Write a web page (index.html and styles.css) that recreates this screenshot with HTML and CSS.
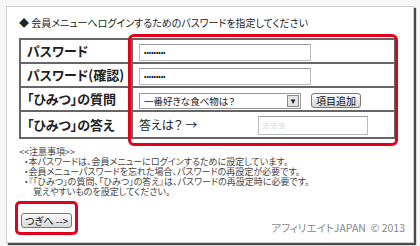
FILE: index.html
```html
<!DOCTYPE html>
<html lang="ja">
<head>
    <meta charset="UTF-8">
    <title>パスワード指定</title>
    <link rel="stylesheet" href="styles.css">
</head>
<body>
    <!-- 外枠 -->
    <div class="panel">
        <p class="ttl">◆ 会員メニューへログインするためのパスワードを指定してください</p>

        <!-- 入力テーブル -->
        <div class="tblwrap">
            <table class="frm">
                <tr>
                    <th>パスワード</th>
                    <td><span class="inp pw">•••••••••</span></td>
                </tr>
                <tr>
                    <th>パスワード(確認)</th>
                    <td><span class="inp pw">•••••••••</span></td>
                </tr>
                <tr>
                    <th>「ひみつ」の質問</th>
                    <td>
                        <span class="sel">一番好きな食べ物は？<span class="arr">▾</span></span><span class="btn add">項目追加</span>
                    </td>
                </tr>
                <tr>
                    <th>「ひみつ」の答え</th>
                    <td class="ans"><span class="q">答えは？ →</span><span class="inp small">※※※</span></td>
                </tr>
            </table>
            <!-- 赤枠(強調) -->
            <div class="mark m1"></div>
        </div>

        <!-- 注意事項 -->
        <ul class="note">
            <li>&lt;&lt;注意事項&gt;&gt;</li>
            <li class="dot">・本パスワードは、会員メニューにログインするために設定しています。</li>
            <li class="dot">・会員メニューパスワードを忘れた場合、パスワードの再設定が必要です。</li>
            <li class="dot">・『「ひみつ」の質問、「ひみつ」の答え』は、パスワードの再設定時に必要です。</li>
            <li class="sub">覚えやすいものを設定してください。</li>
        </ul>

        <div class="foot">
            <div class="nextbox">
                <span class="btn next">つぎへ --&gt;</span>
            </div>
            <p class="copy">アフィリエイトJAPAN &nbsp;© 2013</p>
        </div>
    </div>
</body>
</html>
```

FILE: styles.css
```css
html,body{
    margin: 0;padding: 0;
}
body{
    width: 420px; height: 246px;
    background-color: #f6f6f6;
    font-family: "Noto Sans CJK JP", "DejaVu Sans", sans-serif;
    /* 詰め組み(プロポーショナル) */
    font-feature-settings: "palt";
    color: #222;
    overflow: hidden;
}
/* 外枠 */
.panel{
    margin: 6px 0 0 6px;
    width: 382px; height: 221px;
    padding: 9px 12px 5px 12px;
    background-color: #fff;
    border: 1px solid #cfcfcf;
    box-shadow: 2px 2px 1px #4a4a4a;
}
.ttl{
    margin: 0 0 8px 0;
    font-size: 10px; line-height: 14px;
    color: #222;
}
/* テーブル */
.tblwrap{
    position: relative;
    width: 377px;
}
.frm{
    width: 377px;
    border-collapse: collapse;
    border: 2px solid #555;
}
.frm th, .frm td{
    border: 2px solid #666;
    padding: 0;
    line-height: 18px;
}
.frm th{
    width: 104px;
    text-align: left;
    padding-left: 6px;
    font-size: 13px; font-weight: bold;
    height: 22px;
    white-space: nowrap;
}
.frm td{
    padding-left: 6px;
    white-space: nowrap;
}
.frm tr:last-child th{ height: 25px; }
.inp{
    display: inline-block;
    width: 166px; height: 15px;
    border: 1px solid #bbb;
    border-top-color: #999;
    vertical-align: middle;
    background: #fff;
}
.pw{
    font-size: 7px; line-height: 15px;
    padding-left: 4px;
    color: #000;
}
.small{
    width: 105px; height: 17px;
    font-size: 8px; line-height: 17px;
    color: #bbb; padding-left: 3px;
}
.ans{
    font-size: 12px;
}
.q{
    display: inline-block;
    width: 119px;
    vertical-align: middle;
}
.sel{
    display: inline-block;
    position: relative;
    width: 156px; height: 14px;
    border: 1px solid #999;
    font-size: 9.5px; line-height: 14px;
    padding-left: 4px;
    vertical-align: middle;
}
.arr{
    position: absolute;
    right: 1px; top: 1px;
    width: 10px; height: 10px;
    border: 1px solid #888;
    background: #e4e4e4;
    font-size: 9px; line-height: 10px;
    text-align: center;
}
.btn{
    display: inline-block;
    border: 1px solid #777;
    border-radius: 3px;
    background-image: linear-gradient(to bottom, #fafafa, #d8d8d8);
    font-size: 10px; line-height: 13px;
    color: #111;
    vertical-align: middle;
    white-space: nowrap;
}
.add{
    margin-left: 10px;
    padding: 0 4px;
}
/* 赤枠 */
.mark{
    position: absolute;
    border: 3px solid #e2001a;
    border-radius: 6px;
}
.m1{
    left: 109px; top: -4px;
    width: 264px; height: 106px;
}
/* 注意事項 */
.note{
    margin: 8px 0 0 0; padding: 0; list-style: none;
    font-size: 9px;
    color: #444;
}
.note li{
    height: 10px; line-height: 10px;
    white-space: nowrap;
}
.note .dot{ padding-left: 5px; }
.note .sub{ padding-left: 14px; }
.foot{
    display: flex;
    justify-content: space-between;
    align-items: flex-end;
    margin-top: 4px;
}
.nextbox{
    border: 3px solid #e2001a;
    border-radius: 5px;
    padding: 2px 3px;
    margin-left: -4px;
}
.next{
    padding: 0 3px;
}
.copy{
    margin: 0 -4px 0 0;
    font-size: 10.5px; line-height: 14px;
    color: #888;
}
```
